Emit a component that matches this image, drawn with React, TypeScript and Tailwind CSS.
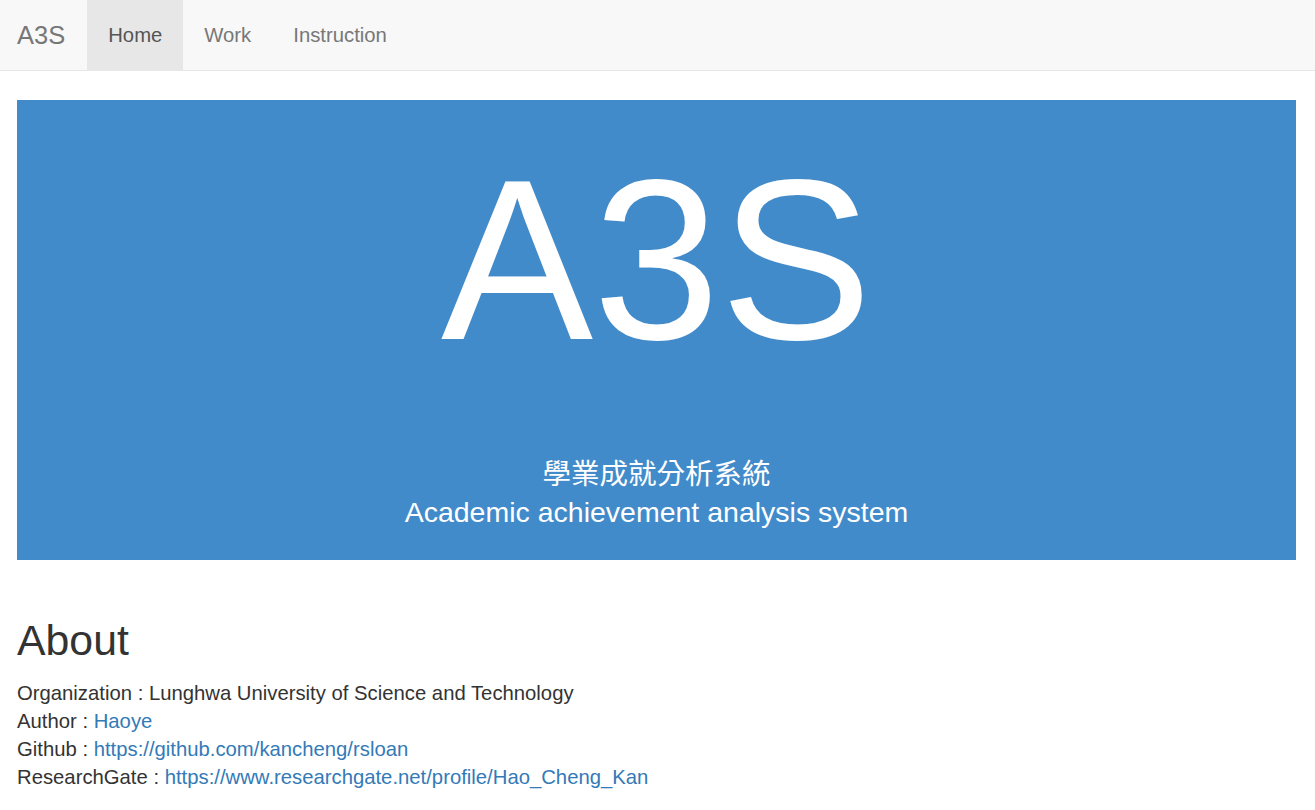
import React from "react";

const sans = { fontFamily: '"Liberation Sans", Arial, "Noto Sans CJK TC", sans-serif' };

export default function App() {
  return (
    <div className="min-h-[810px] bg-white text-[#333]" style={sans}>
      <nav className="flex h-[71px] items-stretch border-b border-[#e7e7e7] bg-[#f8f8f8]">
        <a className="flex items-center pl-[17px] pr-[22px] text-[25.5px] text-[#777]">A3S</a>
        <a className="flex items-center bg-[#e7e7e7] px-[21px] text-[20.3px] text-[#555]">Home</a>
        <a className="flex items-center px-[21px] text-[20.3px] text-[#777]">Work</a>
        <a className="flex items-center px-[21px] text-[20.3px] text-[#777]">Instruction</a>
      </nav>

      <section className="ml-[17px] mt-[29px] flex h-[460px] w-[1279px] flex-col items-center bg-[#428bca] pt-[45px] text-white">
        <div className="text-[228px] leading-[230px]">A3S</div>
        <div
          className="mt-[77px] text-[28.5px] leading-[40px]"
          style={{ fontFamily: '"Noto Sans CJK TC", "Liberation Sans", sans-serif' }}
        >
          學業成就分析系統
        </div>
        <div className="text-[28.5px] leading-[40px]">Academic achievement analysis system</div>
      </section>

      <section className="mt-[57px] px-[17px]">
        <h2 className="text-[42.8px] leading-[46px] text-[#333]">About</h2>
        <div className="mt-[16px] text-[20.3px] leading-[28px]">
          <div>Organization : Lunghwa University of Science and Technology</div>
          <div>
            Author : <a className="text-[#337ab7]">Haoye</a>
          </div>
          <div>
            Github : <a className="text-[#337ab7]">https://github.com/kancheng/rsloan</a>
          </div>
          <div>
            ResearchGate : <a className="text-[#337ab7]">https://www.researchgate.net/profile/Hao_Cheng_Kan</a>
          </div>
        </div>
      </section>
    </div>
  );
}
